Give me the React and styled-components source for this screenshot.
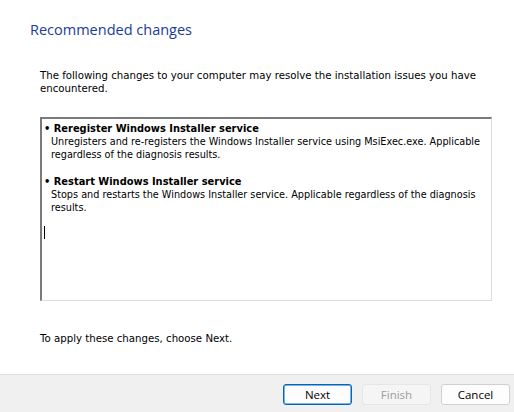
import styled, { createGlobalStyle } from 'styled-components';

const GlobalStyle = createGlobalStyle`
  html, body {
    margin: 0;
    padding: 0;
    background: #ffffff;
  }
  #root {
    width: 514px;
    height: 412px;
  }
`;

const Dialog = styled.div`
  width: 514px;
  height: 412px;
  display: flex;
  flex-direction: column;
  background: #ffffff;
  overflow: hidden;
`;

const Content = styled.div`
  flex: 1;
  display: flex;
  flex-direction: column;
  padding: 20px 22px 0 30px;
`;

const Title = styled.h1`
  margin: 0;
  font-family: 'Open Sans', 'Noto Sans', sans-serif;
  font-weight: 400;
  font-size: 14.5px;
  line-height: 20px;
  color: #1a3b9c;
`;

const Body = styled.div`
  padding-left: 10px;
  font-family: Tahoma, 'DejaVu Sans', sans-serif;
  font-size: 10.2px;
  line-height: 13px;
  color: #000000;
`;

const Intro = styled.p`
  margin: 29px 0 0;
`;

const ChangeBox = styled.div`
  margin-top: 22px;
  height: 184px;
  box-sizing: border-box;
  border-style: solid;
  border-width: 2px 1px 1px 2px;
  border-color: #7a7a7a #dcdcdc #dcdcdc #7a7a7a;
  padding: 3px 2px;
  font-size: 9.7px;
`;

const Item = styled.div`
  margin-bottom: 14px;
`;

const ItemTitle = styled.div`
  font-weight: 700;
  font-size: 9.9px;
`;

const ItemDesc = styled.div`
  padding-left: 7px;
`;

const Caret = styled.div`
  width: 1px;
  height: 13px;
  margin-top: -2px;
  background: #000000;
`;

const Outro = styled.p`
  margin: 31px 0 0;
`;

const Footer = styled.div`
  height: 38px;
  box-sizing: border-box;
  border-top: 1px solid #dfdfdf;
  background: #f0f0f0;
  display: flex;
  justify-content: flex-end;
  align-items: flex-start;
  gap: 10px;
  padding: 9px 4px 0 0;
`;

const Button = styled.button`
  width: 69px;
  height: 21px;
  box-sizing: border-box;
  border-radius: 3px;
  font-family: 'Open Sans', 'Noto Sans', sans-serif;
  font-size: 11.5px;
  line-height: 17px;
  padding: 0;
  background: ${(p) => (p.disabled ? '#f5f5f5' : '#fdfdfd')};
  color: ${(p) => (p.disabled ? '#9d9d9d' : '#000000')};
  border: 1px solid
    ${(p) => (p.primary ? '#0067c0' : p.disabled ? '#e6e6e6' : '#d0d0d0')};
  ${(p) => p.primary && 'box-shadow: inset 0 0 0 0.5px #0067c0;'}
`;

const changes = [
  {
    title: 'Reregister Windows Installer service',
    desc: 'Unregisters and re-registers the Windows Installer service using MsiExec.exe. Applicable regardless of the diagnosis results.',
  },
  {
    title: 'Restart Windows Installer service',
    desc: 'Stops and restarts the Windows Installer service. Applicable regardless of the diagnosis results.',
  },
];

export default function App() {
  return (
    <Dialog>
      <GlobalStyle />
      <Content>
        <Title>Recommended changes</Title>
        <Body>
          <Intro>
            The following changes to your computer may resolve the installation issues you have
            encountered.
          </Intro>
          <ChangeBox>
            {changes.map((c) => (
              <Item key={c.title}>
                <ItemTitle>• {c.title}</ItemTitle>
                <ItemDesc>{c.desc}</ItemDesc>
              </Item>
            ))}
            <Caret />
          </ChangeBox>
          <Outro>To apply these changes, choose Next.</Outro>
        </Body>
      </Content>
      <Footer>
        <Button primary>Next</Button>
        <Button disabled>Finish</Button>
        <Button>Cancel</Button>
      </Footer>
    </Dialog>
  );
}
